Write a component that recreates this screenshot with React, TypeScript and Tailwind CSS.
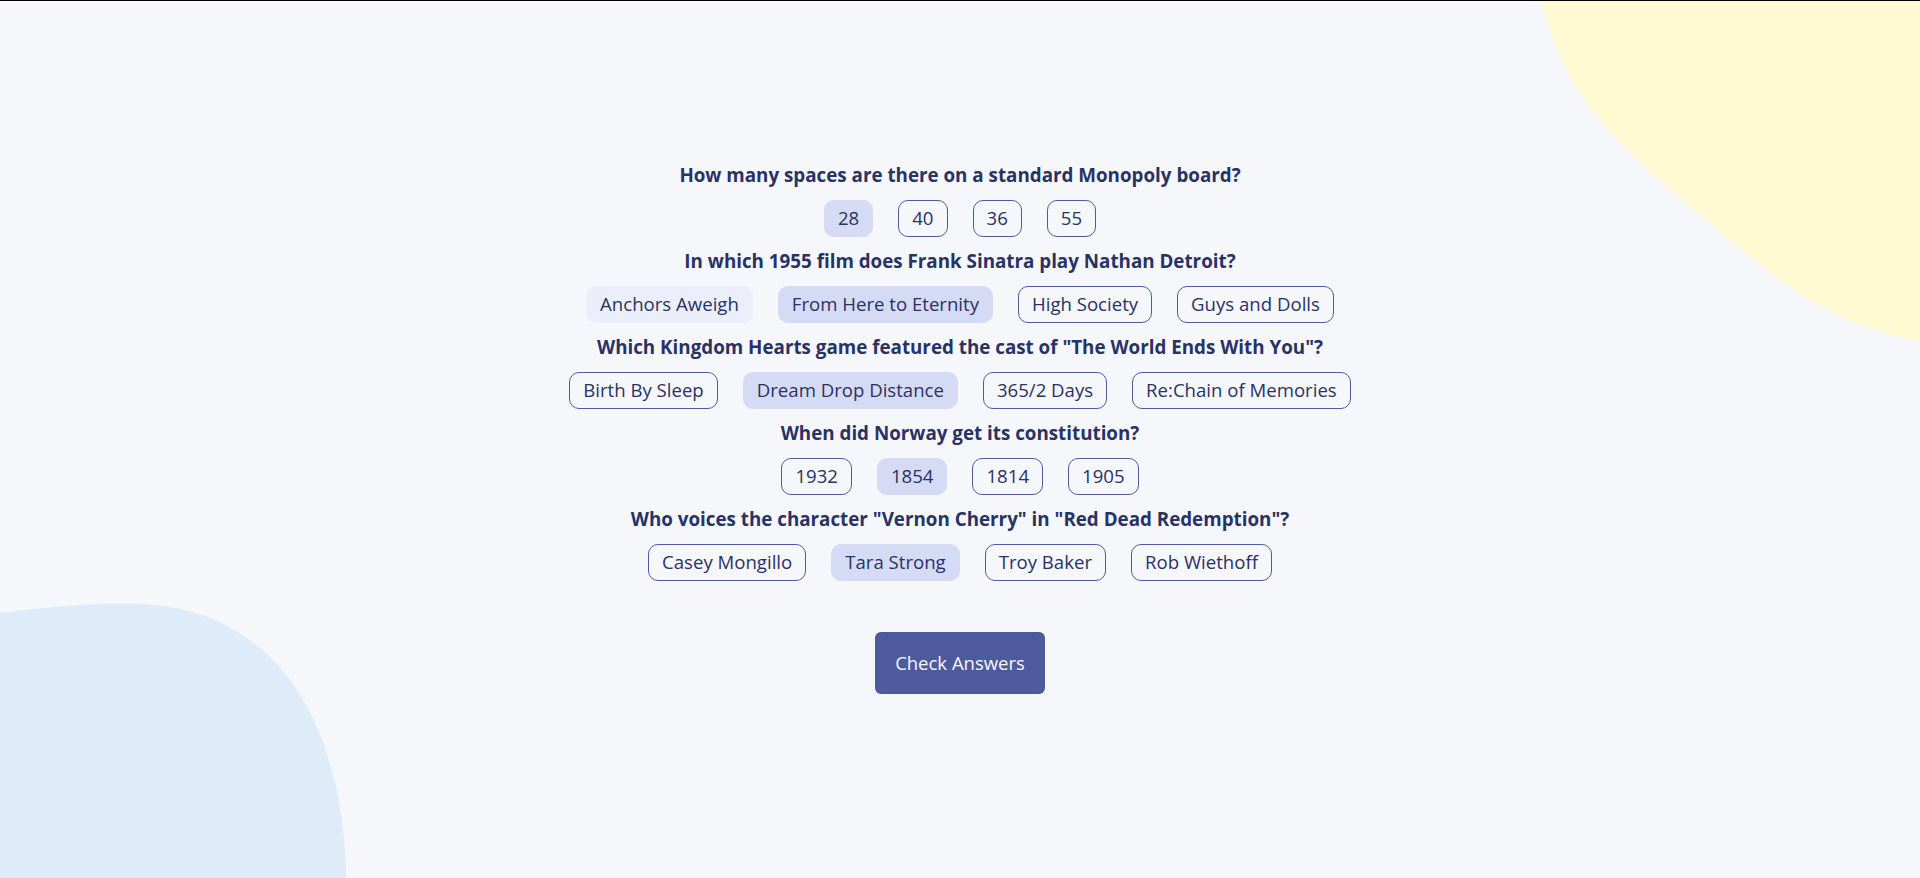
import React, { useState } from 'react';

type Question = {
    question: string;
    answers: string[];
    selected: number;
    hovered?: number;
};

const QUESTIONS: Question[] = [
    { question: "How many spaces are there on a standard Monopoly board?", answers: ["28", "40", "36", "55"], selected: 0 },
    { question: "In which 1955 film does Frank Sinatra play Nathan Detroit?", answers: ["Anchors Aweigh", "From Here to Eternity", "High Society", "Guys and Dolls"], selected: 1, hovered: 0 },
    { question: "Which Kingdom Hearts game featured the cast of \"The World Ends With You\"?", answers: ["Birth By Sleep", "Dream Drop Distance", "365/2 Days", "Re:Chain of Memories"], selected: 1 },
    { question: "When did Norway get its constitution?", answers: ["1932", "1854", "1814", "1905"], selected: 1 },
    { question: "Who voices the character \"Vernon Cherry\" in \"Red Dead Redemption\"?", answers: ["Casey Mongillo", "Tara Strong", "Troy Baker", "Rob Wiethoff"], selected: 1 },
];

const App = () => {
    const [questions, setQuestions] = useState(QUESTIONS);

    const handleSelect = (qIndex: number, aIndex: number) => {
        setQuestions(questions.map((q, i) => (i === qIndex ? { ...q, selected: aIndex } : q)));
    };

    return (
        <div className="relative min-h-screen overflow-hidden bg-[#F5F7FB] border-t border-black font-['Open_Sans',sans-serif] text-[#293264]">
            {/* yellow blob */}
            <svg className="absolute top-0 right-0" width="380" height="340" viewBox="0 0 380 340">
                <path d="M2 0 C 20 80, 60 130, 150 205 S 280 320, 380 340 L380 0 Z" fill="#FFFAD1" />
            </svg>

            {/* blue blob */}
            <svg className="absolute bottom-0 left-0" width="350" height="278" viewBox="0 0 350 278">
                <path d="M0 13 C 50 7, 100 2, 140 4 C 260 8, 340 100, 346 270 L346 278 L0 278 Z" fill="#DEEBF8" />
            </svg>

            <div className="relative flex flex-col items-center pt-[162px]">
                <div className="flex flex-col items-center gap-[12px]">
                    {questions.map((q, qIndex) => (
                        <div key={qIndex} className="flex flex-col items-center">
                            <h2 className="text-[18.8px] leading-[25px] font-bold">{q.question}</h2>
                            <div className="flex gap-[25px] mt-[12px]">
                                {q.answers.map((answer, aIndex) => {
                                    const selected = q.selected === aIndex;
                                    const hovered = q.hovered === aIndex;
                                    return (
                                        <button
                                            key={aIndex}
                                            onClick={() => handleSelect(qIndex, aIndex)}
                                            className={
                                                selected
                                                    ? "h-[37px] px-[13px] rounded-[10px] border border-[#D6DBF5] bg-[#D6DBF5] text-[18.6px] leading-none cursor-pointer"
                                                    : hovered
                                                        ? "h-[37px] px-[13px] rounded-[10px] border border-[#ECEFFA] bg-[#ECEFFA] text-[18.6px] leading-none cursor-pointer"
                                                        : "h-[37px] px-[13px] rounded-[10px] border border-[#4D5B9E] bg-transparent text-[18.6px] leading-none cursor-pointer"
                                            }
                                        >
                                            {answer}
                                        </button>
                                    );
                                })}
                            </div>
                        </div>
                    ))}
                </div>

                <button className="mt-[51px] h-[62px] px-5 rounded-md bg-[#4D5B9E] text-[#F5F7FB] text-[18.5px] cursor-pointer">
                    Check Answers
                </button>
            </div>
        </div>
    );
};

export default App;
